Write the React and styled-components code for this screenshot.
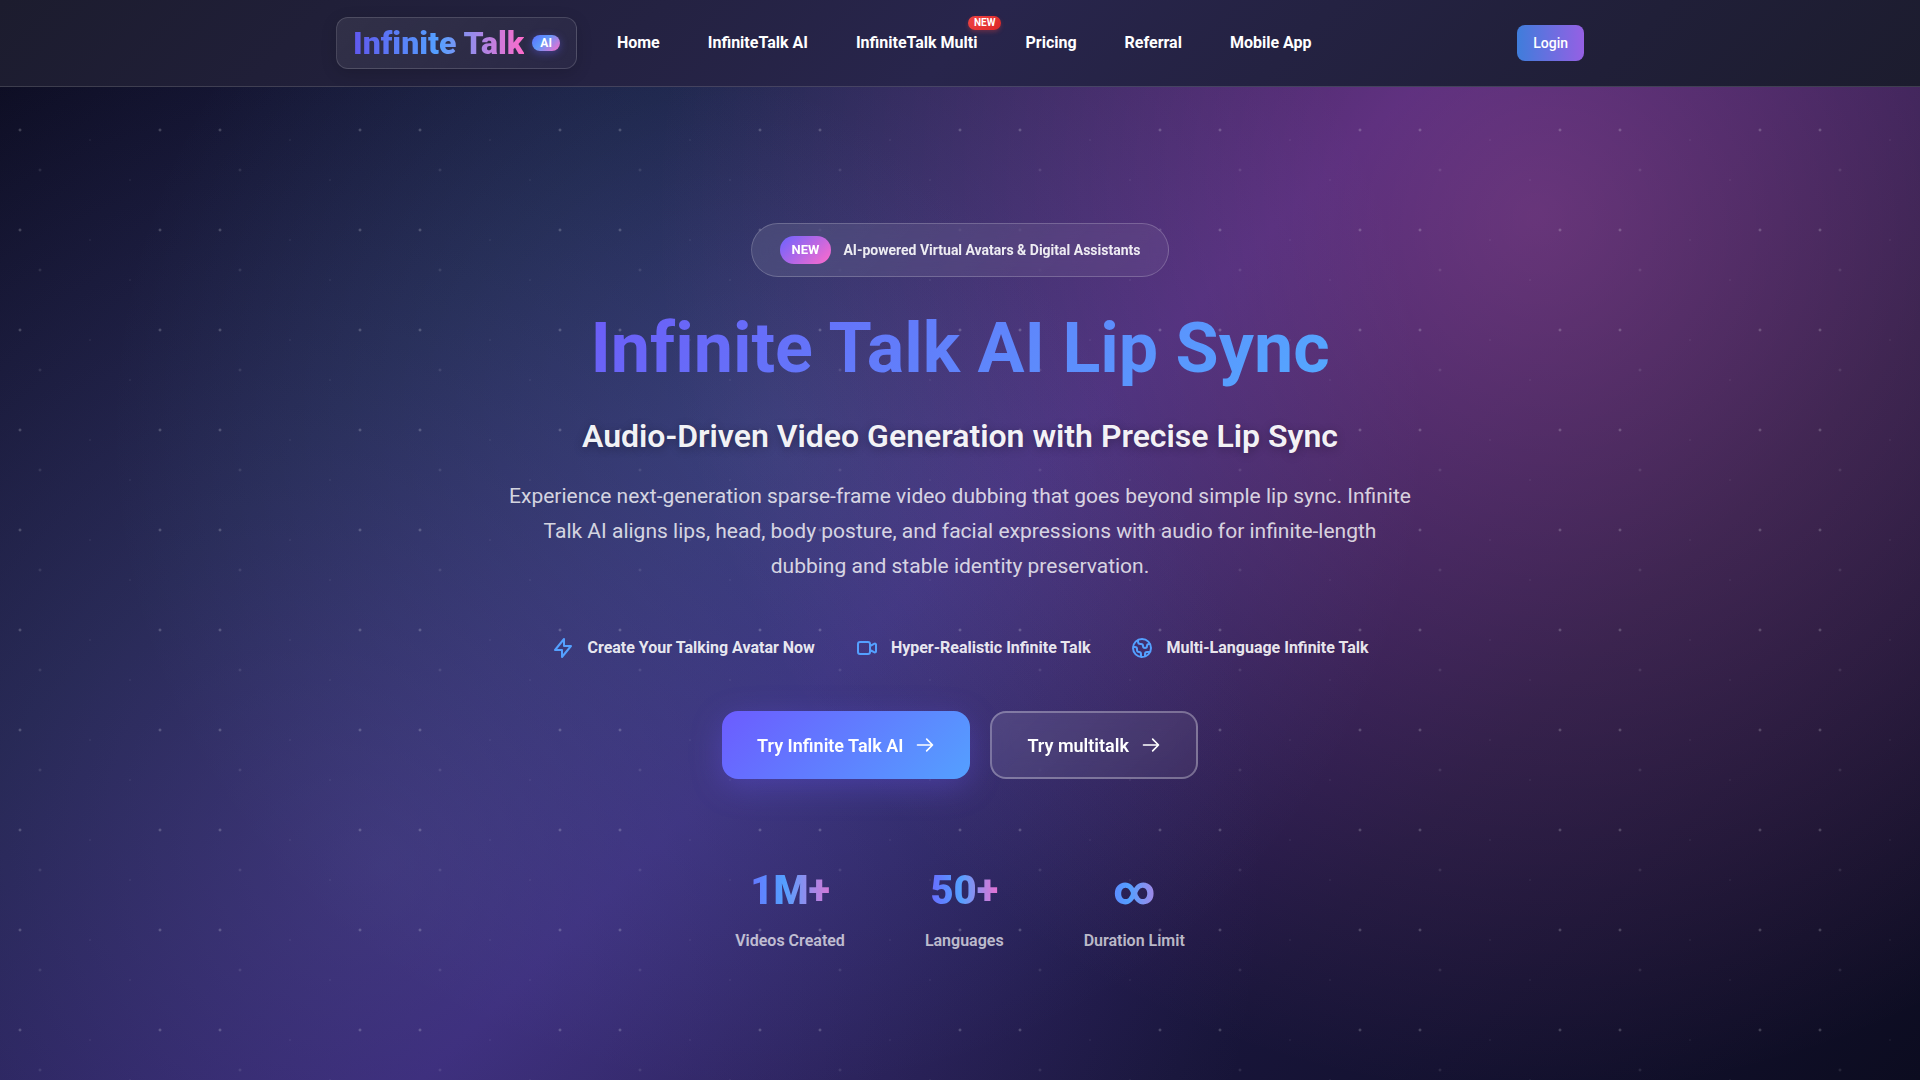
import React from 'react';
import styled, { createGlobalStyle } from 'styled-components';

const navItems = [
  { label: 'Home' },
  { label: 'InfiniteTalk AI' },
  { label: 'InfiniteTalk Multi', badge: 'NEW' },
  { label: 'Pricing' },
  { label: 'Referral' },
  { label: 'Mobile App' },
];

const features = [
  { label: 'Create Your Talking Avatar Now', path: 'M13 10V3L4 14h7v7l9-11h-7z' },
  {
    label: 'Hyper-Realistic Infinite Talk',
    path: 'M15 10l4.553-2.276A1 1 0 0121 8.618v6.764a1 1 0 01-1.447.894L15 14M5 18h8a2 2 0 002-2V8a2 2 0 00-2-2H5a2 2 0 00-2 2v8a2 2 0 002 2z',
  },
  {
    label: 'Multi-Language Infinite Talk',
    path: 'M3.055 11H5a2 2 0 012 2v1a2 2 0 002 2 2 2 0 012 2v2.945M8 3.935V5.5A2.5 2.5 0 0010.5 8h.5a2 2 0 012 2 2 2 0 104 0 2 2 0 012-2h1.064M15 20.488V18a2 2 0 012-2h3.064M21 12a9 9 0 11-18 0 9 9 0 0118 0z',
  },
];

const stats = [
  { value: '1M+', label: 'Videos Created' },
  { value: '50+', label: 'Languages' },
  { value: '∞', label: 'Duration Limit' },
];

const Icon = ({ path, size = 24 }) => (
  <svg
    width={size}
    height={size}
    viewBox="0 0 24 24"
    fill="none"
    stroke="currentColor"
    strokeWidth="2"
    strokeLinecap="round"
    strokeLinejoin="round"
    aria-hidden="true"
  >
    <path d={path} />
  </svg>
);

const Arrow = () => <Icon size={20} path="M14 5l7 7m0 0l-7 7m7-7H3" />;

const App = () => {
  return (
    <Page>
      <GlobalStyle />
      <Header>
        <HeaderInner>
          <Logo href="#">
            <LogoText>Infinite Talk</LogoText>
            <LogoTag>AI</LogoTag>
          </Logo>
          <Nav>
            {navItems.map((item) => (
              <NavLink href="#" key={item.label}>
                {item.label}
                {item.badge && <NavBadge>{item.badge}</NavBadge>}
              </NavLink>
            ))}
          </Nav>
          <LoginButton type="button">Login</LoginButton>
        </HeaderInner>
      </Header>
      <Hero>
        <Announcement>
          <AnnouncementTag>NEW</AnnouncementTag>
          AI-powered Virtual Avatars &amp; Digital Assistants
        </Announcement>
        <Title>Infinite Talk AI Lip Sync</Title>
        <Subtitle>Audio-Driven Video Generation with Precise Lip Sync</Subtitle>
        <Description>
          Experience next-generation sparse-frame video dubbing that goes beyond simple lip sync.
          Infinite Talk AI aligns lips, head, body posture, and facial expressions with audio for
          infinite-length dubbing and stable identity preservation.
        </Description>
        <Features>
          {features.map((feature) => (
            <Feature key={feature.label}>
              <Icon path={feature.path} />
              {feature.label}
            </Feature>
          ))}
        </Features>
        <Actions>
          <ActionButton type="button" $primary>
            Try Infinite Talk AI
            <Arrow />
          </ActionButton>
          <ActionButton type="button">
            Try multitalk
            <Arrow />
          </ActionButton>
        </Actions>
        <Stats>
          {stats.map((stat) => (
            <Stat key={stat.label}>
              <StatValue>{stat.value}</StatValue>
              <StatLabel>{stat.label}</StatLabel>
            </Stat>
          ))}
        </Stats>
      </Hero>
    </Page>
  );
};

export default App;

const GlobalStyle = createGlobalStyle`
  * {
    box-sizing: border-box;
  }
  body {
    margin: 0;
    background: #0f0f23;
    font-family: Roboto, "Liberation Sans", sans-serif;
    color: #fff;
  }
  button {
    font-family: inherit;
    cursor: pointer;
  }
`;

const Page = styled.div`
  min-height: 100vh;
  background:
    radial-gradient(2px 2px at 20px 30px, rgba(255, 255, 255, 0.3), transparent) 0 0 / 200px 100px,
    radial-gradient(2px 2px at 40px 70px, rgba(255, 255, 255, 0.15), transparent) 0 0 / 200px 100px,
    radial-gradient(1px 1px at 90px 40px, rgba(255, 255, 255, 0.15), transparent) 0 0 / 200px 100px,
    radial-gradient(1px 1px at 130px 80px, rgba(255, 255, 255, 0.15), transparent) 0 0 / 200px 100px,
    radial-gradient(2px 2px at 160px 30px, rgba(255, 255, 255, 0.3), transparent) 0 0 / 200px 100px,
    radial-gradient(circle at 20% 80%, rgba(120, 119, 198, 0.3) 0%, transparent 50%),
    radial-gradient(circle at 80% 20%, rgba(255, 119, 198, 0.3) 0%, transparent 50%),
    radial-gradient(circle at 40% 40%, rgba(120, 219, 255, 0.15) 0%, transparent 50%),
    linear-gradient(135deg, #0c0c20 0%, #181a40 25%, #2d1b69 50%, #18153a 75%, #0c0c20 100%);
`;

const Header = styled.header`
  background: linear-gradient(135deg, #1c1c2e 0%, #28254c 50%, #1c1c2e 100%);
  border-bottom: 1px solid rgba(255, 255, 255, 0.15);
`;

const HeaderInner = styled.div`
  display: flex;
  align-items: center;
  max-width: 1280px;
  height: 86px;
  margin: 0 auto;
  padding: 0 16px;
`;

const Logo = styled.a`
  display: flex;
  align-items: center;
  gap: 8px;
  height: 52px;
  padding: 0 16px;
  border: 1px solid rgba(255, 255, 255, 0.15);
  border-radius: 12px;
  background: linear-gradient(135deg, rgba(255, 255, 255, 0.08), rgba(255, 255, 255, 0.03));
  box-shadow: 0 4px 16px rgba(0, 0, 0, 0.15);
  text-decoration: none;
`;

const LogoText = styled.span`
  font-size: 32px;
  font-weight: 900;
  line-height: 38px;
  font-variant-ligatures: none;
  background: linear-gradient(90deg, #6058ee 0%, #54a0ff 50%, #ff6bcb 100%);
  background-clip: text;
  color: transparent;
`;

const LogoTag = styled.span`
  padding: 0 8px;
  border-radius: 8px;
  background: linear-gradient(135deg, #5a6cff 0%, #5f98fa 40%, #ff6bcb 100%);
  box-shadow: 0 2px 8px rgba(108, 99, 255, 0.4);
  color: #fff;
  font-size: 12px;
  font-weight: 700;
  line-height: 16px;
`;

const Nav = styled.nav`
  display: flex;
  gap: 48px;
  margin-left: 40px;
`;

const NavLink = styled.a`
  position: relative;
  color: #fff;
  font-size: 16px;
  font-weight: 700;
  line-height: 24px;
  text-decoration: none;
`;

const NavBadge = styled.span`
  position: absolute;
  top: -15px;
  right: -24px;
  padding: 0 6px;
  border-radius: 7px;
  background: linear-gradient(135deg, #ef4444, #dc2626);
  box-shadow: 0 2px 4px rgba(239, 68, 68, 0.3);
  font-size: 10px;
  font-weight: 700;
  line-height: 14px;
`;

const LoginButton = styled.button`
  height: 36px;
  margin-left: auto;
  padding: 0 16px;
  border: 0;
  border-radius: 8px;
  background: linear-gradient(90deg, #3f7ddb, #9560e4);
  color: #fff;
  font-size: 14px;
  font-weight: 500;
`;

const Hero = styled.main`
  display: flex;
  flex-direction: column;
  align-items: center;
  padding: 136px 16px 96px;
  text-align: center;
`;

const Announcement = styled.div`
  display: flex;
  align-items: center;
  gap: 12px;
  padding: 12px 28px;
  border: 1px solid rgba(255, 255, 255, 0.2);
  border-radius: 27px;
  background: linear-gradient(135deg, rgba(255, 255, 255, 0.1), rgba(255, 255, 255, 0.05));
  backdrop-filter: blur(10px);
  color: rgba(255, 255, 255, 0.9);
  font-size: 14px;
  font-weight: 700;
`;

const AnnouncementTag = styled.span`
  padding: 0 12px;
  border-radius: 14px;
  background: linear-gradient(135deg, #6c63ff, #ff6bcb);
  color: #fff;
  font-size: 13px;
  font-weight: 700;
  line-height: 28px;
`;

const Title = styled.h1`
  margin: 32px 0 0;
  font-size: 70px;
  font-weight: 700;
  line-height: 78px;
  font-variant-ligatures: none;
  background: linear-gradient(135deg, #6c5cf7 0%, #54a8ff 100%);
  background-clip: text;
  color: transparent;
`;

const Subtitle = styled.h2`
  margin: 28px 0 0;
  font-size: 32px;
  font-weight: 600;
  line-height: 42px;
  text-shadow: 0 2px 10px rgba(0, 0, 0, 0.3);
  color: rgba(255, 255, 255, 0.95);
`;

const Description = styled.p`
  max-width: 905px;
  margin: 22px 0 0;
  color: rgba(255, 255, 255, 0.8);
  font-size: 21px;
  line-height: 35px;
`;

const Features = styled.div`
  display: flex;
  flex-wrap: wrap;
  justify-content: center;
  gap: 16px 40px;
  margin-top: 52px;
`;

const Feature = styled.div`
  display: flex;
  align-items: center;
  gap: 12px;
  color: rgba(255, 255, 255, 0.9);
  font-size: 16px;
  font-weight: 700;
  line-height: 24px;

  svg {
    color: #54a0ff;
  }
`;

const Actions = styled.div`
  display: flex;
  flex-wrap: wrap;
  justify-content: center;
  gap: 20px;
  margin-top: 51px;
`;

const ActionButton = styled.button`
  display: flex;
  align-items: center;
  gap: 12px;
  height: 68px;
  padding: 0 35px;
  border: ${({ $primary }) => ($primary ? '0' : '2px solid rgba(255, 255, 255, 0.3)')};
  border-radius: 16px;
  background: ${({ $primary }) =>
    $primary
      ? 'linear-gradient(135deg, #6c5cff, #54a0ff)'
      : 'linear-gradient(135deg, rgba(255, 255, 255, 0.1), rgba(255, 255, 255, 0.05))'};
  backdrop-filter: blur(10px);
  box-shadow: ${({ $primary }) => ($primary ? '0 8px 32px rgba(108, 92, 255, 0.3)' : 'none')};
  color: #fff;
  font-size: 18px;
  font-weight: 600;
`;

const Stats = styled.div`
  display: flex;
  flex-wrap: wrap;
  justify-content: center;
  gap: 24px 80px;
  margin-top: 88px;
`;

const Stat = styled.div`
  display: flex;
  flex-direction: column;
  gap: 14px;
`;

const StatValue = styled.div`
  font-size: 40px;
  font-weight: 900;
  line-height: 48px;
  background: linear-gradient(90deg, #6c63ff 0%, #54a0ff 45%, #ff6bcb 100%);
  background-clip: text;
  color: transparent;
`;

const StatLabel = styled.div`
  color: rgba(255, 255, 255, 0.7);
  font-size: 16px;
  font-weight: 600;
  line-height: 24px;
`;
